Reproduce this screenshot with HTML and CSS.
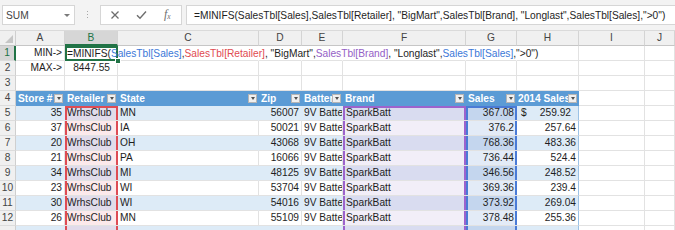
FILE: index.html
```html
<!DOCTYPE html>
<html>
<head>
<meta charset="utf-8">
<link rel="stylesheet" href="styles.css">
</head>
<body>
<div class="toolbar">
  <div class="namebox"><span>SUM</span><span class="nbarrow"></span></div>
  <div class="grip"><i></i><i></i><i></i></div>
  <div class="btnbox">
    <svg class="ico" width="10" height="10" viewBox="0 0 10 10"><path d="M1.5 1.5L8.5 8.5M8.5 1.5L1.5 8.5" stroke="#6e6e6e" stroke-width="1.3" fill="none"/></svg>
    <svg class="ico" width="11" height="10" viewBox="0 0 11 10"><path d="M1 5.2L4 8.2L10 1.5" stroke="#6e6e6e" stroke-width="1.4" fill="none"/></svg>
    <span class="fx"><i>f</i><sub>x</sub></span>
  </div>
  <div class="fbox">=MINIFS(SalesTbl[Sales],SalesTbl[Retailer], "BigMart",SalesTbl[Brand], "Longlast",SalesTbl[Sales],"&gt;0")</div>
</div>

<div class="sheet">
  <div class="corner"><svg width="8" height="8" viewBox="0 0 8 8"><path d="M8 0V8H0Z" fill="#c6c6c6"/></svg></div>
  <div class="ch">A</div><div class="ch sel">B</div><div class="ch">C</div><div class="ch">D</div><div class="ch">E</div><div class="ch">F</div><div class="ch">G</div><div class="ch">H</div><div class="ch">I</div><div class="ch">J</div>

  <div class="rh rsel">1</div>
  <div class="c num">MIN-&gt;</div>
  <div class="c active"><span class="ftext">=MINIFS(<span class="fb">SalesTbl[Sales]</span>,<span class="fr">SalesTbl[Retailer]</span>, "BigMart",<span class="fp">SalesTbl[Brand]</span>, "Longlast",<span class="fb">SalesTbl[Sales]</span>,"&gt;0")</span><span class="handle"></span></div>
  <div class="c nr"></div><div class="c nr"></div><div class="c nr"></div><div class="c nr"></div><div class="c nr"></div><div class="c"></div><div class="c"></div><div class="c"></div>

  <div class="rh">2</div>
  <div class="c num">MAX-&gt;</div>
  <div class="c num pad7">8447.55</div>
  <div class="c"></div><div class="c"></div><div class="c"></div><div class="c"></div><div class="c"></div><div class="c"></div><div class="c"></div><div class="c"></div>

  <div class="rh">3</div>
  <div class="c"></div><div class="c"></div><div class="c"></div><div class="c"></div><div class="c"></div><div class="c"></div><div class="c"></div><div class="c"></div><div class="c"></div><div class="c"></div>

  <div class="rh">4</div>
  <div class="th"><span class="tt">Store #</span><span class="dd"></span></div>
  <div class="th"><span class="tt">Retailer</span><span class="dd"></span></div>
  <div class="th"><span class="tt">State</span><span class="dd"></span></div>
  <div class="th"><span class="tt">Zip</span><span class="dd"></span></div>
  <div class="th"><span class="tt">Battery</span><span class="dd"></span></div>
  <div class="th"><span class="tt">Brand</span><span class="dd"></span></div>
  <div class="th"><span class="tt">Sales</span><span class="dd"></span></div>
  <div class="th last"><span class="tt">2014 Sales</span><span class="dd"></span></div>
  <div class="c"></div><div class="c"></div>

  <div class="rh">5</div>
  <div class="c b num">35</div><div class="c b rr top">WrhsClub</div><div class="c b">MN</div><div class="c b num">56007</div><div class="c b">9V Battery</div><div class="c b pr top">SparkBatt</div><div class="c b br top num">367.08</div><div class="c b h acct"><span>$</span><span>259.92</span></div>
  <div class="c"></div><div class="c"></div>

  <div class="rh">6</div>
  <div class="c num">37</div><div class="c rr">WrhsClub</div><div class="c">IA</div><div class="c num">50021</div><div class="c">9V Battery</div><div class="c pr">SparkBatt</div><div class="c br num">376.2</div><div class="c h num">257.64</div>
  <div class="c"></div><div class="c"></div>

  <div class="rh">7</div>
  <div class="c b num">20</div><div class="c b rr">WrhsClub</div><div class="c b">OH</div><div class="c b num">43068</div><div class="c b">9V Battery</div><div class="c b pr">SparkBatt</div><div class="c b br num">768.36</div><div class="c b h num">483.36</div>
  <div class="c"></div><div class="c"></div>

  <div class="rh">8</div>
  <div class="c num">21</div><div class="c rr">WrhsClub</div><div class="c">PA</div><div class="c num">16066</div><div class="c">9V Battery</div><div class="c pr">SparkBatt</div><div class="c br num">736.44</div><div class="c h num">524.4</div>
  <div class="c"></div><div class="c"></div>

  <div class="rh">9</div>
  <div class="c b num">34</div><div class="c b rr">WrhsClub</div><div class="c b">MI</div><div class="c b num">48125</div><div class="c b">9V Battery</div><div class="c b pr">SparkBatt</div><div class="c b br num">346.56</div><div class="c b h num">248.52</div>
  <div class="c"></div><div class="c"></div>

  <div class="rh">10</div>
  <div class="c num">23</div><div class="c rr">WrhsClub</div><div class="c">WI</div><div class="c num">53704</div><div class="c">9V Battery</div><div class="c pr">SparkBatt</div><div class="c br num">369.36</div><div class="c h num">239.4</div>
  <div class="c"></div><div class="c"></div>

  <div class="rh">11</div>
  <div class="c b num">30</div><div class="c b rr">WrhsClub</div><div class="c b">WI</div><div class="c b num">54016</div><div class="c b">9V Battery</div><div class="c b pr">SparkBatt</div><div class="c b br num">373.92</div><div class="c b h num">269.04</div>
  <div class="c"></div><div class="c"></div>

  <div class="rh">12</div>
  <div class="c num">26</div><div class="c rr">WrhsClub</div><div class="c">MN</div><div class="c num">55109</div><div class="c">9V Battery</div><div class="c pr">SparkBatt</div><div class="c br num">378.48</div><div class="c h num">255.36</div>
  <div class="c"></div><div class="c"></div>

  <div class="rh"></div>
  <div class="c b"></div><div class="c b rr"></div><div class="c b"></div><div class="c b"></div><div class="c b"></div><div class="c b pr"></div><div class="c b br"></div><div class="c b h"></div>
  <div class="c"></div><div class="c"></div>
</div>
</body>
</html>
```

FILE: styles.css
```css
html, body {
  margin: 0;
  padding: 0;
}
body {
  width: 675px;
  height: 230px;
  overflow: hidden;
  background: #ffffff;
  font-family: "Liberation Sans", Arial, sans-serif;
  font-size: 10.2px;
  color: #1e1e1e;
}

/* ---------- formula bar ---------- */
.toolbar {
  height: 31px;
  box-sizing: border-box;
  background: #f3f3f3;
  border-bottom: 1px solid #dadada;
  display: flex;
  align-items: flex-start;
  padding-top: 5px;
}
.namebox {
  margin-left: 2px;
  width: 73px;
  height: 20px;
  box-sizing: border-box;
  background: #ffffff;
  border: 1px solid #d6d6d6;
  display: flex;
  align-items: center;
  justify-content: space-between;
  padding: 0 4px 0 3px;
  color: #444444;
}
.nbarrow {
  width: 0;
  height: 0;
  border-left: 3px solid transparent;
  border-right: 3px solid transparent;
  border-top: 3px solid #7a7a7a;
}
.grip {
  margin-left: 12px;
  margin-top: 6px;
  width: 2px;
  display: flex;
  flex-direction: column;
  gap: 2px;
}
.grip i {
  display: block;
  width: 1px;
  height: 1px;
  background: #a8a8a8;
}
.btnbox {
  margin-left: 11px;
  width: 82px;
  height: 20px;
  box-sizing: border-box;
  background: #ffffff;
  border: 1px solid #d6d6d6;
  display: flex;
  align-items: center;
  padding-left: 9px;
  gap: 16px;
}
.fx {
  font-family: "Liberation Serif", "Times New Roman", serif;
  font-size: 12px;
  color: #6e6e6e;
  line-height: 10px;
  margin-left: 1px;
}
.fx sub {
  font-size: 7.5px;
  font-style: italic;
  vertical-align: -1px;
}
.fbox {
  margin-left: 4px;
  flex: 1;
  height: 20px;
  box-sizing: border-box;
  background: #ffffff;
  border: 1px solid #d6d6d6;
  border-right: 0;
  padding-left: 7px;
  line-height: 19px;
  white-space: nowrap;
  overflow: hidden;
  color: #1e1e1e;
}

/* ---------- grid ---------- */
.sheet {
  display: grid;
  grid-template-columns: 16px 49px 53px 141px 43px 41px 123px 51px 62px 66px 30px;
  grid-auto-rows: 15px;
}
.corner {
  background: #f0f0f0;
  border-right: 1px solid #cfcfcf;
  border-bottom: 1px solid #c6c6c6;
  display: flex;
  align-items: flex-end;
  justify-content: flex-end;
  padding: 0 2px 2px 0;
}
.ch {
  background: #f0f0f0;
  border-right: 1px solid #d4d4d4;
  border-bottom: 1px solid #c6c6c6;
  text-align: center;
  line-height: 14px;
  color: #444444;
}
.ch.sel {
  background: #d6d6d6;
  color: #217346;
  border-bottom: 2px solid #217346;
  line-height: 13px;
}
.rh {
  background: #f0f0f0;
  border-right: 1px solid #cfcfcf;
  border-bottom: 1px solid #dcdcdc;
  text-align: center;
  line-height: 14px;
  color: #444444;
}
.rh.rsel {
  background: #d6d6d6;
  color: #217346;
  border-right: 2px solid #217346;
}

.c {
  border-right: 1px solid #e2e2e2;
  border-bottom: 1px solid #e2e2e2;
  line-height: 14px;
  padding: 0 2px;
  white-space: nowrap;
  overflow: hidden;
  min-width: 0;
}
.c.nr {
  border-right-color: transparent;
}
.num {
  text-align: right;
}
.pad7 {
  padding-right: 7px;
}

/* active cell B1 in edit mode */
.c.active {
  position: relative;
  overflow: visible;
  border-right: 0;
  border-bottom: 0;
  box-shadow: inset 0 0 0 2px #217346;
  padding-left: 2px;
  line-height: 15px;
}
.ftext {
  color: #1e1e1e;
}
.fb { color: #3b78d8; }
.fr { color: #df4a50; }
.fp { color: #9460c6; }
.handle {
  position: absolute;
  right: -3px;
  bottom: -3px;
  width: 4px;
  height: 4px;
  background: #217346;
  border: 1px solid #ffffff;
}

/* table header */
.th {
  background: #5b9bd5;
  color: #ffffff;
  font-weight: bold;
  display: flex;
  align-items: center;
  padding: 0 2px 0 2px;
  min-width: 0;
}
.th .tt {
  flex: 1;
  min-width: 0;
  overflow: hidden;
  white-space: nowrap;
  line-height: 14px;
}
.th.last {
  padding-left: 1px;
}
.dd {
  flex: none;
  width: 9px;
  height: 9px;
  box-sizing: border-box;
  background: #efefef;
  border: 1px solid #b5b5b5;
  display: flex;
  align-items: center;
  justify-content: center;
}
.dd::after {
  content: "";
  width: 0;
  height: 0;
  border-left: 2.5px solid transparent;
  border-right: 2.5px solid transparent;
  border-top: 3px solid #505050;
}

/* banded rows */
.c.b {
  background: #ddebf7;
  border-right-color: #ddebf7;
}
.c.h {
  border-right: 1px solid #9bc2e6;
}
.acct {
  display: flex;
  justify-content: space-between;
  padding-left: 4px;
  padding-right: 7px;
}

/* formula range highlights */
.c.rr, .c.pr, .c.br {
  border-right: 0;
}
.c.rr {
  background: #fce9eb;
  box-shadow: inset 2px 0 #de4c55, inset -2px 0 #de4c55;
}
.c.b.rr { background: #e1dbea; }
.c.rr.top {
  box-shadow: inset 2px 0 #de4c55, inset -2px 0 #de4c55, inset 0 2px #de4c55;
}
.c.pr {
  background: #f2eef8;
  box-shadow: inset 2px 0 #9d63cc, inset -2px 0 #9d63cc;
  padding-left: 3px;
}
.c.b.pr { background: #d9dcf0; }
.c.pr.top {
  box-shadow: inset 2px 0 #9d63cc, inset -2px 0 #9d63cc, inset 0 2px #9d63cc;
}
.c.br {
  background: #e3ebf7;
  box-shadow: inset 2px 0 #4a7bd6, inset -2px 0 #4a7bd6;
  padding-right: 3px;
}
.c.b.br { background: #c4d6ee; }
.c.br.top {
  box-shadow: inset 2px 0 #4a7bd6, inset -2px 0 #4a7bd6, inset 0 2px #4a7bd6;
}
```
